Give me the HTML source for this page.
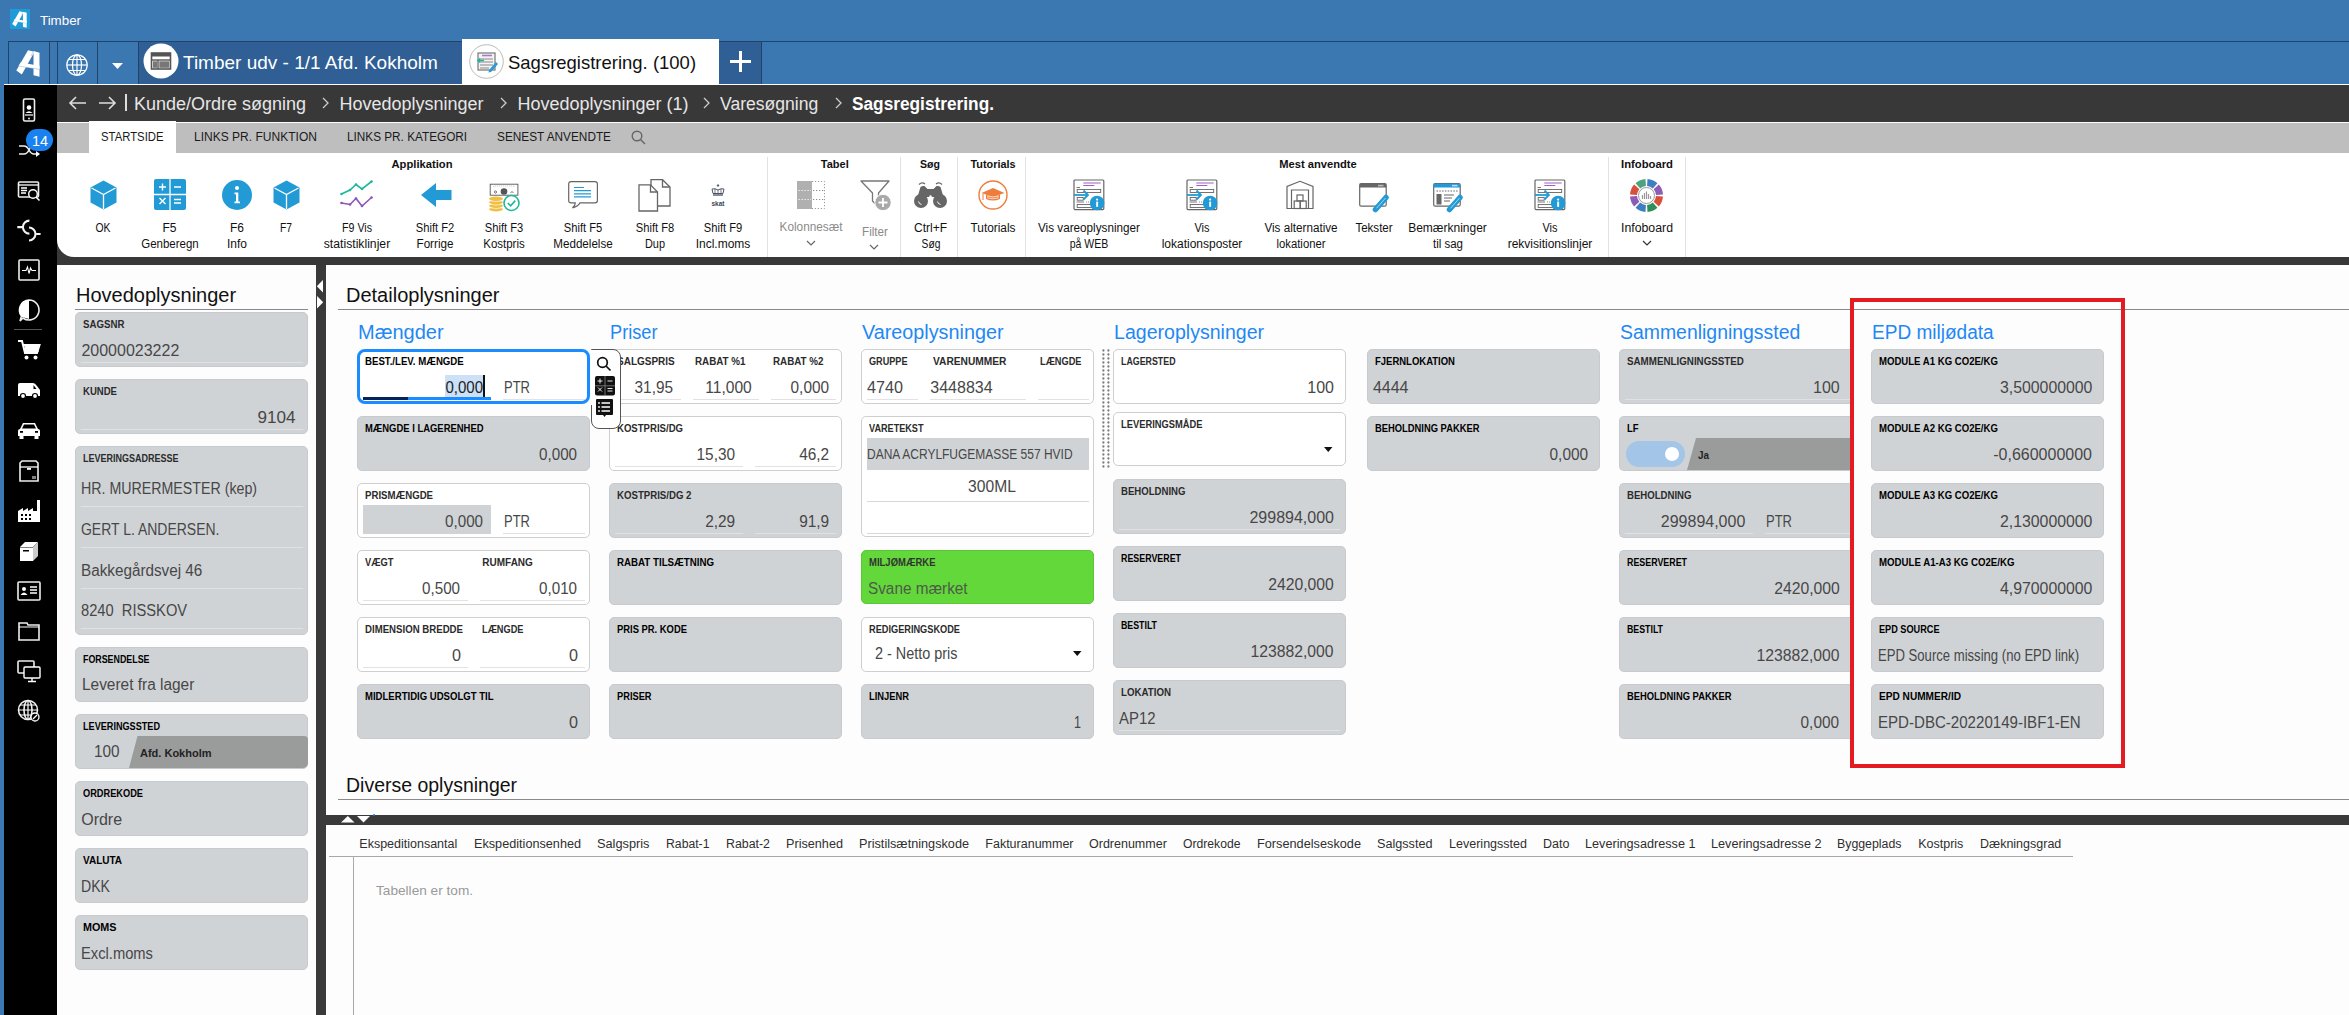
<!DOCTYPE html>
<html><head><meta charset="utf-8"><title>Timber</title>
<style>
html,body{margin:0;padding:0;}
body{width:2349px;height:1015px;position:relative;overflow:hidden;background:#fdfdfd;font-family:"Liberation Sans", sans-serif;}
.a{position:absolute;box-sizing:border-box;}
.t{position:absolute;white-space:pre;line-height:1;font-family:"Liberation Sans", sans-serif;}
svg{position:absolute;overflow:visible;}
</style></head><body>
<div class="a" style="left:0px;top:0px;width:2349px;height:85px;background:#3b77b1;"></div>
<div class="a" style="left:8px;top:41px;width:2341px;height:1px;background:#21436a;"></div>
<div class="a" style="left:10px;top:9px;width:20px;height:20px;background:#1f9bd8;"></div>
<svg style="left:12px;top:11px" width="15" height="17" viewBox="0 0 24 27"><path d="M12 0.3 L18.5 1.8 L5.8 24.5 L0.3 20.5 Z" fill="#fff"/><path d="M17.5 1 L23.5 2.8 L23.5 26.8 L17.5 25.2 Z" fill="#fff"/><path d="M4.5 12.5 L23.5 15.8 L23.5 19.5 L2.5 16.3 Z" fill="#fff"/><path d="M3.2 16.2 L23.5 19.4" stroke="#1f9bd8" stroke-width="0.6" opacity="0.5"/><path d="M17.3 1.5 L15 6" stroke="#1f9bd8" stroke-width="0.6" opacity="0.5"/></svg>
<span class="t" style="top:14.00px;font-size:13px;font-weight:400;color:#fff;left:40px;transform:scaleX(1.026);transform-origin:left;">Timber</span>
<div class="a" style="left:8px;top:41px;width:42px;height:44px;border:1px solid #21436a;border-bottom:none;"></div>
<svg style="left:16px;top:50px" width="24" height="27" viewBox="0 0 24 27"><path d="M12 0.3 L18.5 1.8 L5.8 24.5 L0.3 20.5 Z" fill="#fff"/><path d="M17.5 1 L23.5 2.8 L23.5 26.8 L17.5 25.2 Z" fill="#fff"/><path d="M4.5 12.5 L23.5 15.8 L23.5 19.5 L2.5 16.3 Z" fill="#fff"/><path d="M3.2 16.2 L23.5 19.4" stroke="#3b77b1" stroke-width="0.6" opacity="0.5"/><path d="M17.3 1.5 L15 6" stroke="#3b77b1" stroke-width="0.6" opacity="0.5"/></svg>
<div class="a" style="left:57px;top:41px;width:82px;height:44px;border:1px solid #21436a;border-bottom:none;"></div>
<div class="a" style="left:97px;top:41px;width:1px;height:44px;background:#21436a;"></div>
<svg style="left:66px;top:54px" width="22" height="22" viewBox="0 0 22 22" fill="none" stroke="#fff" stroke-width="1.2"><circle cx="11" cy="11" r="10.2"/><ellipse cx="11" cy="11" rx="4.5" ry="10.2"/><line x1="11" y1="0.8" x2="11" y2="21.2"/><line x1="0.8" y1="11" x2="21.2" y2="11"/><path d="M2.5 5.5 H19.5 M2.5 16.5 H19.5"/></svg>
<svg style="left:112px;top:63px" width="11" height="6" viewBox="0 0 11 6"><path d="M0 0 H11 L5.5 6 Z" fill="#fff"/></svg>
<div class="a" style="left:138px;top:41px;width:324px;height:44px;background:#2f5f94;border-top:1px solid #21436a;border-left:1px solid #21436a;"></div>
<svg style="left:143px;top:43px" width="36" height="36" viewBox="0 0 36 36"><circle cx="18" cy="18" r="17.5" fill="#fff"/><rect x="8.5" y="10" width="19" height="16" fill="none" stroke="#555" stroke-width="1.6"/><rect x="8.5" y="10" width="19" height="3.5" fill="#555"/><line x1="8.5" y1="17" x2="27.5" y2="17" stroke="#555" stroke-width="1.4"/><line x1="15" y1="17" x2="15" y2="26" stroke="#555" stroke-width="1.4"/><rect x="10" y="18.3" width="4" height="6.5" fill="#777"/><rect x="16.3" y="18.3" width="10" height="6.5" fill="#777"/></svg>
<span class="t" style="top:52.92px;font-size:19px;font-weight:400;color:#fff;left:183px;">Timber udv - 1/1 Afd. Kokholm</span>
<div class="a" style="left:462px;top:39px;width:257px;height:46px;background:#fff;"></div>
<svg style="left:469px;top:44px" width="35" height="35" viewBox="0 0 35 35"><circle cx="17.5" cy="17.5" r="16.8" fill="#fff" stroke="#bbb" stroke-width="1"/><rect x="9" y="9" width="17" height="17" fill="#f4f4f4" stroke="#777" stroke-width="1.2"/><line x1="13" y1="11.5" x2="23" y2="11.5" stroke="#a678c8" stroke-width="1.6"/><path d="M11 15 H24 M11 18 H24 M11 21 H24 M11 24 H20" stroke="#888" stroke-width="1"/><path d="M9 16.5 H15 M11 14.5 L9 16.5 L11 18.5" stroke="#1fb39a" stroke-width="1.4" fill="none"/><path d="M20 26 L27 18 L29 20 L22 28 L19.5 28.5 Z" fill="#2a9ad6"/></svg>
<span class="t" style="top:52.92px;font-size:19px;font-weight:400;color:#111;left:508px;transform:scaleX(0.973);transform-origin:left;">Sagsregistrering. (100)</span>
<div class="a" style="left:719px;top:41px;width:43px;height:44px;background:#2f5f94;border-right:1px solid #21436a;border-top:1px solid #21436a;"></div>
<div class="a" style="left:730px;top:60px;width:21px;height:3px;background:#fff;"></div>
<div class="a" style="left:739px;top:51px;width:3px;height:21px;background:#fff;"></div>
<div class="a" style="left:4px;top:84px;width:2345px;height:1px;background:#fff;"></div>
<div class="a" style="left:0px;top:85px;width:4px;height:930px;background:#3b77b1;"></div>
<div class="a" style="left:4px;top:85px;width:53px;height:930px;background:#000;"></div>
<div class="a" style="left:57px;top:85px;width:2292px;height:37px;background:#383838;"></div>
<svg style="left:69px;top:95px" width="50" height="16" viewBox="0 0 50 16" fill="none" stroke="#ddd" stroke-width="1.6"><path d="M1 8 H17 M7 2 L1 8 L7 14"/><path d="M30 8 H46 M40 2 L46 8 L40 14"/></svg>
<div class="a" style="left:125px;top:94px;width:1.5px;height:17px;background:#ddd;"></div>
<span class="t" style="top:95.26px;font-size:18px;font-weight:400;color:#e6e6e6;left:134px;">Kunde/Ordre søgning</span>
<svg style="left:322px;top:97px" width="7" height="12" viewBox="0 0 7 12" fill="none" stroke="#ccc" stroke-width="1.3"><path d="M1 1 L6 6 L1 11"/></svg>
<span class="t" style="top:95.26px;font-size:18px;font-weight:400;color:#e6e6e6;left:339.5px;">Hovedoplysninger</span>
<svg style="left:500px;top:97px" width="7" height="12" viewBox="0 0 7 12" fill="none" stroke="#ccc" stroke-width="1.3"><path d="M1 1 L6 6 L1 11"/></svg>
<span class="t" style="top:95.26px;font-size:18px;font-weight:400;color:#e6e6e6;left:517.5px;">Hovedoplysninger (1)</span>
<svg style="left:703px;top:97px" width="7" height="12" viewBox="0 0 7 12" fill="none" stroke="#ccc" stroke-width="1.3"><path d="M1 1 L6 6 L1 11"/></svg>
<span class="t" style="top:95.26px;font-size:18px;font-weight:400;color:#e6e6e6;left:720.3px;transform:scaleX(0.976);transform-origin:left;">Varesøgning</span>
<svg style="left:835px;top:97px" width="7" height="12" viewBox="0 0 7 12" fill="none" stroke="#ccc" stroke-width="1.3"><path d="M1 1 L6 6 L1 11"/></svg>
<span class="t" style="top:95.26px;font-size:18px;font-weight:700;color:#fff;left:852.3px;transform:scaleX(0.959);transform-origin:left;">Sagsregistrering.</span>
<div class="a" style="left:57px;top:123px;width:2292px;height:30px;background:#bebebe;"></div>
<div class="a" style="left:89px;top:121px;width:87px;height:32px;background:#fff;"></div>
<span class="t" style="top:130.62px;font-size:12.5px;font-weight:400;color:#1a1a1a;left:101px;transform:scaleX(0.906);transform-origin:left;">STARTSIDE</span>
<span class="t" style="top:130.62px;font-size:12.5px;font-weight:400;color:#1a1a1a;left:194px;transform:scaleX(0.962);transform-origin:left;">LINKS PR. FUNKTION</span>
<span class="t" style="top:130.62px;font-size:12.5px;font-weight:400;color:#1a1a1a;left:347px;transform:scaleX(0.941);transform-origin:left;">LINKS PR. KATEGORI</span>
<span class="t" style="top:130.62px;font-size:12.5px;font-weight:400;color:#1a1a1a;left:497.3px;transform:scaleX(0.945);transform-origin:left;">SENEST ANVENDTE</span>
<svg style="left:631px;top:130px" width="15" height="15" viewBox="0 0 15 15" fill="none" stroke="#666" stroke-width="1.4"><circle cx="6" cy="6" r="4.8"/><path d="M9.5 9.5 L14 14"/></svg>
<div class="a" style="left:57px;top:153px;width:2292px;height:112px;background:#383838;"></div>
<div class="a" style="left:57px;top:153px;width:2292px;height:104px;background:#fff;border-bottom-left-radius:17px;"></div>
<span class="t" style="top:159.49px;font-size:11px;font-weight:700;color:#111;left:-178.5px;width:1200px;text-align:center;transform:scaleX(1.019);transform-origin:center;">Applikation</span>
<span class="t" style="top:159.49px;font-size:11px;font-weight:700;color:#111;left:234.79999999999995px;width:1200px;text-align:center;">Tabel</span>
<span class="t" style="top:159.49px;font-size:11px;font-weight:700;color:#111;left:330px;width:1200px;text-align:center;transform:scaleX(0.962);transform-origin:center;">Søg</span>
<span class="t" style="top:159.49px;font-size:11px;font-weight:700;color:#111;left:392.6px;width:1200px;text-align:center;transform:scaleX(0.986);transform-origin:center;">Tutorials</span>
<span class="t" style="top:159.49px;font-size:11px;font-weight:700;color:#111;left:718px;width:1200px;text-align:center;transform:scaleX(1.015);transform-origin:center;">Mest anvendte</span>
<span class="t" style="top:159.49px;font-size:11px;font-weight:700;color:#111;left:1047px;width:1200px;text-align:center;transform:scaleX(1.025);transform-origin:center;">Infoboard</span>
<div class="a" style="left:767px;top:157px;width:1px;height:100px;background:#e2e2e2;"></div>
<div class="a" style="left:900px;top:157px;width:1px;height:100px;background:#e2e2e2;"></div>
<div class="a" style="left:957px;top:157px;width:1px;height:100px;background:#e2e2e2;"></div>
<div class="a" style="left:1025px;top:157px;width:1px;height:100px;background:#e2e2e2;"></div>
<div class="a" style="left:1608px;top:157px;width:1px;height:100px;background:#e2e2e2;"></div>
<div class="a" style="left:1685px;top:157px;width:1px;height:100px;background:#e2e2e2;"></div>
<svg style="left:89.5px;top:180px" width="27" height="30" viewBox="0 0 27 30"><path d="M13.5 0.5 L26.5 7.5 L26.5 22.5 L13.5 29.5 L0.5 22.5 L0.5 7.5 Z" fill="#229ad6"/><path d="M1.5 8 L13.5 14.5 L25.5 8 M13.5 14.5 V29" stroke="#fff" stroke-width="1.3" fill="none"/></svg>
<span class="t" style="top:221.54px;font-size:12px;font-weight:400;color:#111;left:-497px;width:1200px;text-align:center;transform:scaleX(0.865);transform-origin:center;">OK</span>
<svg style="left:154px;top:179px" width="32" height="31" viewBox="0 0 32 31"><rect x="0" y="0" width="32" height="31" rx="2" fill="#229ad6"/><path d="M16 0 V31 M0 15.5 H32" stroke="#fff" stroke-width="1.3"/><path d="M5 8 H12 M8.5 4.5 V11.5 M20 8 H27 M20 20.5 H27 M20 24 H27 M5.5 19 L11.5 25 M11.5 19 L5.5 25" stroke="#fff" stroke-width="1.4"/></svg>
<span class="t" style="top:221.54px;font-size:12px;font-weight:400;color:#111;left:-430.5px;width:1200px;text-align:center;">F5</span>
<span class="t" style="top:237.74px;font-size:12px;font-weight:400;color:#111;left:-430.5px;width:1200px;text-align:center;transform:scaleX(0.956);transform-origin:center;">Genberegn</span>
<svg style="left:222px;top:180px" width="30" height="30" viewBox="0 0 30 30"><circle cx="15" cy="15" r="15" fill="#229ad6"/><circle cx="15" cy="8" r="2" fill="#fff"/><path d="M12.5 12.5 H16.3 V21.5 H18 V23.3 H12.5 V21.5 H14 V14.3 H12.5 Z" fill="#fff"/></svg>
<span class="t" style="top:221.54px;font-size:12px;font-weight:400;color:#111;left:-363px;width:1200px;text-align:center;">F6</span>
<span class="t" style="top:237.74px;font-size:12px;font-weight:400;color:#111;left:-363px;width:1200px;text-align:center;">Info</span>
<svg style="left:272.5px;top:180px" width="27" height="30" viewBox="0 0 27 30"><path d="M13.5 0.5 L26.5 7.5 L26.5 22.5 L13.5 29.5 L0.5 22.5 L0.5 7.5 Z" fill="#229ad6"/><path d="M1.5 8 L13.5 14.5 L25.5 8 M13.5 14.5 V29" stroke="#fff" stroke-width="1.3" fill="none"/></svg>
<span class="t" style="top:221.54px;font-size:12px;font-weight:400;color:#111;left:-314px;width:1200px;text-align:center;transform:scaleX(0.856);transform-origin:center;">F7</span>
<svg style="left:340px;top:180px" width="33" height="29" viewBox="0 0 33 29" fill="none"><path d="M1.5 14 L10 10 L16 4.5 L22 9 L31.5 1.5" stroke="#1db99a" stroke-width="1.6"/><path d="M1.5 23 L10 24.5 L16 18.5 L22 26 L31.5 17.5" stroke="#8e55b8" stroke-width="1.6"/><g fill="#1db99a"><circle cx="1.5" cy="14" r="1.3"/><circle cx="10" cy="10" r="1.3"/><circle cx="16" cy="4.5" r="1.3"/><circle cx="22" cy="9" r="1.3"/><circle cx="31.5" cy="1.5" r="1.3"/></g><g fill="#8e55b8"><circle cx="1.5" cy="23" r="1.3"/><circle cx="10" cy="24.5" r="1.3"/><circle cx="16" cy="18.5" r="1.3"/><circle cx="22" cy="26" r="1.3"/><circle cx="31.5" cy="17.5" r="1.3"/></g></svg>
<span class="t" style="top:221.54px;font-size:12px;font-weight:400;color:#111;left:-243px;width:1200px;text-align:center;transform:scaleX(0.888);transform-origin:center;">F9 Vis</span>
<span class="t" style="top:237.74px;font-size:12px;font-weight:400;color:#111;left:-243px;width:1200px;text-align:center;transform:scaleX(1.017);transform-origin:center;">statistiklinjer</span>
<svg style="left:420.5px;top:183px" width="31" height="24" viewBox="0 0 31 24"><path d="M0 12 L15 0 V7 H30.5 V17 H15 V24 Z" fill="#229ad6"/></svg>
<span class="t" style="top:221.54px;font-size:12px;font-weight:400;color:#111;left:-165px;width:1200px;text-align:center;transform:scaleX(0.931);transform-origin:center;">Shift F2</span>
<span class="t" style="top:237.74px;font-size:12px;font-weight:400;color:#111;left:-165px;width:1200px;text-align:center;transform:scaleX(0.973);transform-origin:center;">Forrige</span>
<svg style="left:488px;top:183px" width="33" height="29" viewBox="0 0 33 29"><rect x="2.2" y="1.2" width="27.7" height="11" fill="#fff" stroke="#555" stroke-width="0.9"/><path d="M5 4 Q6 3 8 3 H24 Q26 3 27 4" stroke="#999" stroke-width="0.6" stroke-dasharray="1 1" fill="none"/><circle cx="16" cy="8.5" r="3.3" fill="#555"/><circle cx="7.5" cy="9" r="1.1" fill="none" stroke="#555" stroke-width="0.8"/><path d="M22.5 9.5 Q24 8 25.5 9.5" stroke="#555" stroke-width="0.8" fill="none"/><g fill="#f0bf45"><ellipse cx="8" cy="26.3" rx="7" ry="2.2"/><ellipse cx="8" cy="22.8" rx="7" ry="2.2"/><ellipse cx="8" cy="19.3" rx="7" ry="2.2"/><ellipse cx="8" cy="15.8" rx="7" ry="2.2"/></g><path d="M1 17.6 Q8 19.6 15 17.6 M1 21.1 Q8 23.1 15 21.1 M1 24.6 Q8 26.6 15 24.6" stroke="#fff" stroke-width="0.6" fill="none"/><circle cx="23.5" cy="20" r="7.5" fill="#fff" stroke="#1db99a" stroke-width="1.6"/><path d="M19.8 20 L22.6 22.8 L27.3 17.6" stroke="#1db99a" stroke-width="1.6" fill="none"/></svg>
<span class="t" style="top:221.54px;font-size:12px;font-weight:400;color:#111;left:-96.5px;width:1200px;text-align:center;transform:scaleX(0.931);transform-origin:center;">Shift F3</span>
<span class="t" style="top:237.74px;font-size:12px;font-weight:400;color:#111;left:-96.5px;width:1200px;text-align:center;transform:scaleX(0.957);transform-origin:center;">Kostpris</span>
<svg style="left:568px;top:181px" width="31" height="28" viewBox="0 0 31 28"><path d="M3 0.7 H27 Q29.4 0.7 29.4 3 V19.5 Q29.4 21.8 27 21.8 H12 Q10.5 25.5 4.5 26.8 Q7.5 24.5 7.3 21.8 H3 Q0.7 21.8 0.7 19.5 V3 Q0.7 0.7 3 0.7 Z" fill="#fff" stroke="#666" stroke-width="1.2"/><path d="M6 6.5 H16 M6 9.7 H23 M6 12.8 H23 M6 15.8 H23" stroke="#229ad6" stroke-width="1.2"/></svg>
<span class="t" style="top:221.54px;font-size:12px;font-weight:400;color:#111;left:-17px;width:1200px;text-align:center;transform:scaleX(0.931);transform-origin:center;">Shift F5</span>
<span class="t" style="top:237.74px;font-size:12px;font-weight:400;color:#111;left:-17px;width:1200px;text-align:center;transform:scaleX(0.969);transform-origin:center;">Meddelelse</span>
<svg style="left:637.5px;top:178.5px" width="33" height="33" viewBox="0 0 33 33" fill="#fff" stroke="#666" stroke-width="1.3"><path d="M13 0.7 H24.5 L32 8 V27 H13 Z"/><path d="M24.5 0.7 V8 H32" fill="none"/><path d="M1 5.8 H12.5 L19.5 13 V32 H1 Z"/><path d="M12.5 5.8 V13 H19.5" fill="none"/></svg>
<span class="t" style="top:221.54px;font-size:12px;font-weight:400;color:#111;left:55px;width:1200px;text-align:center;transform:scaleX(0.931);transform-origin:center;">Shift F8</span>
<span class="t" style="top:237.74px;font-size:12px;font-weight:400;color:#111;left:55px;width:1200px;text-align:center;transform:scaleX(0.908);transform-origin:center;">Dup</span>
<svg style="left:709px;top:184px" width="18" height="24" viewBox="0 0 18 24"><path d="M9 0 V3 M7.8 1.5 H10.2" stroke="#3a4456" stroke-width="0.8"/><path d="M4 9.5 L3 5 Q6 4 9 6 Q12 4 15 5 L14 9.5 Z" fill="none" stroke="#3a4456" stroke-width="0.9"/><path d="M6 5 V9.5 M9 6 V9.5 M12 5 V9.5" stroke="#3a4456" stroke-width="0.7"/><path d="M4 11 H14" stroke="#3a4456" stroke-width="1.2"/><text x="9" y="22" font-size="6.5" font-weight="700" text-anchor="middle" fill="#3a4456" font-family="Liberation Sans">skat</text></svg>
<span class="t" style="top:221.54px;font-size:12px;font-weight:400;color:#111;left:123px;width:1200px;text-align:center;transform:scaleX(0.931);transform-origin:center;">Shift F9</span>
<span class="t" style="top:237.74px;font-size:12px;font-weight:400;color:#111;left:123px;width:1200px;text-align:center;">Incl.moms</span>
<svg style="left:797px;top:181px" width="28" height="28" viewBox="0 0 28 28"><rect x="0" y="0" width="15" height="28" fill="#b0b0b0"/><g stroke-width="1" stroke-dasharray="1.2 1.8" fill="none"><path d="M15 0.5 H27.5 V27.5 H15" stroke="#999"/><path d="M1.5 9.5 H14 M1.5 18.5 H14" stroke="#fff"/><path d="M16 9.5 H27 M16 18.5 H27" stroke="#888"/></g></svg>
<span class="t" style="top:221.34px;font-size:12px;font-weight:400;color:#8a8a8a;left:211px;width:1200px;text-align:center;transform:scaleX(0.981);transform-origin:center;">Kolonnesæt</span>
<svg style="left:806px;top:240px" width="10" height="6" viewBox="0 0 10 6" fill="none" stroke="#666" stroke-width="1.2"><path d="M1 1 L5 5 L9 1"/></svg>
<svg style="left:860px;top:180px" width="33" height="32" viewBox="0 0 33 32"><path d="M1 1 H29 L18.5 13 V27 L12.5 21 V13 Z" fill="none" stroke="#777" stroke-width="1.3" stroke-linejoin="round"/><circle cx="23" cy="22.5" r="8.2" fill="#a9a9a9" stroke="#fff" stroke-width="1"/><path d="M23 18 V27 M18.5 22.5 H27.5" stroke="#fff" stroke-width="1.8"/></svg>
<span class="t" style="top:225.84px;font-size:12px;font-weight:400;color:#8a8a8a;left:275px;width:1200px;text-align:center;transform:scaleX(0.975);transform-origin:center;">Filter</span>
<svg style="left:869px;top:244px" width="10" height="6" viewBox="0 0 10 6" fill="none" stroke="#666" stroke-width="1.2"><path d="M1 1 L5 5 L9 1"/></svg>
<svg style="left:913.5px;top:181px" width="33" height="28" viewBox="0 0 33 28"><path d="M5 3.5 Q8 0.5 11 3 M22 3 Q25 0.5 28 3.5" stroke="#666" stroke-width="1.2" fill="none"/><path d="M3.5 16 L6.5 6 Q8 4.5 10.5 5 L13.5 8 H19.5 L22.5 5 Q25 4.5 26.5 6 L29.5 16 Z" fill="#666"/><circle cx="7" cy="20" r="7" fill="#666"/><circle cx="26" cy="20" r="7" fill="#666"/><circle cx="16.5" cy="15.5" r="1.2" fill="#fff"/><path d="M4.5 20.5 Q5 23 7.5 23.5 M23.5 20.5 Q24 23 26.5 23.5" stroke="#fff" stroke-width="1" fill="none"/></svg>
<span class="t" style="top:221.54px;font-size:12px;font-weight:400;color:#111;left:330.5px;width:1200px;text-align:center;">Ctrl+F</span>
<span class="t" style="top:237.74px;font-size:12px;font-weight:400;color:#111;left:330.5px;width:1200px;text-align:center;transform:scaleX(0.854);transform-origin:center;">Søg</span>
<svg style="left:978px;top:180px" width="30" height="30" viewBox="0 0 30 30"><circle cx="15" cy="15" r="14" fill="#fff" stroke="#ee7d3b" stroke-width="1.4"/><path d="M3.5 13 L15 8 L26.5 13 L15 17 Z" fill="#ee7d3b"/><path d="M8 14.5 V19 Q15 22 22 19 V14.5 L15 17 Z" fill="#ee7d3b"/><path d="M9 16 Q15 18 21 16 M9 17.8 Q15 19.8 21 17.8" stroke="#fff" stroke-width="0.7" fill="none"/><path d="M5 13.5 V20" stroke="#ee7d3b" stroke-width="1"/></svg>
<span class="t" style="top:221.54px;font-size:12px;font-weight:400;color:#111;left:393px;width:1200px;text-align:center;transform:scaleX(0.987);transform-origin:center;">Tutorials</span>
<svg style="left:1073px;top:179px" width="33" height="32" viewBox="0 0 33 32"><rect x="1" y="1" width="29.8" height="29.6" rx="1" fill="#fff" stroke="#666" stroke-width="1.2"/><path d="M10.3 4 H27.7 M10.3 6.5 H21.3" stroke="#a15fc9" stroke-width="1.1"/><path d="M3.5 8.5 H7 M3.5 23 H11 M13 23 H13.8 M15 23 H15.8" stroke="#666" stroke-width="0.9"/><rect x="4.2" y="10.5" width="23.5" height="3" fill="none" stroke="#666" stroke-width="0.9"/><rect x="4.2" y="18.5" width="6" height="2.7" fill="none" stroke="#666" stroke-width="0.9"/><rect x="4.2" y="25.5" width="18" height="3" fill="none" stroke="#666" stroke-width="0.9"/><path d="M1 16 H15" stroke="#229ad6" stroke-width="1.8"/><path d="M10.5 11.5 L15 16 L10.5 20.5" stroke="#229ad6" stroke-width="1.8" fill="none"/><circle cx="24.1" cy="24" r="7.3" fill="#229ad6"/><circle cx="24.1" cy="20.6" r="1.1" fill="#fff"/><rect x="23.2" y="22.6" width="1.9" height="5.2" fill="#fff"/></svg>
<span class="t" style="top:221.54px;font-size:12px;font-weight:400;color:#111;left:489px;width:1200px;text-align:center;transform:scaleX(0.976);transform-origin:center;">Vis vareoplysninger</span>
<span class="t" style="top:237.74px;font-size:12px;font-weight:400;color:#111;left:489px;width:1200px;text-align:center;transform:scaleX(0.877);transform-origin:center;">på WEB</span>
<svg style="left:1186px;top:179px" width="33" height="32" viewBox="0 0 33 32"><rect x="1" y="1" width="29.8" height="29.6" rx="1" fill="#fff" stroke="#666" stroke-width="1.2"/><path d="M10.3 4 H27.7 M10.3 6.5 H21.3" stroke="#a15fc9" stroke-width="1.1"/><path d="M3.5 8.5 H7 M3.5 23 H11 M13 23 H13.8 M15 23 H15.8" stroke="#666" stroke-width="0.9"/><rect x="4.2" y="10.5" width="23.5" height="3" fill="none" stroke="#666" stroke-width="0.9"/><rect x="4.2" y="18.5" width="6" height="2.7" fill="none" stroke="#666" stroke-width="0.9"/><rect x="4.2" y="25.5" width="18" height="3" fill="none" stroke="#666" stroke-width="0.9"/><path d="M1 16 H15" stroke="#229ad6" stroke-width="1.8"/><path d="M10.5 11.5 L15 16 L10.5 20.5" stroke="#229ad6" stroke-width="1.8" fill="none"/><circle cx="24.1" cy="24" r="7.3" fill="#229ad6"/><circle cx="24.1" cy="20.6" r="1.1" fill="#fff"/><rect x="23.2" y="22.6" width="1.9" height="5.2" fill="#fff"/></svg>
<span class="t" style="top:221.54px;font-size:12px;font-weight:400;color:#111;left:602px;width:1200px;text-align:center;transform:scaleX(0.912);transform-origin:center;">Vis</span>
<span class="t" style="top:237.74px;font-size:12px;font-weight:400;color:#111;left:602px;width:1200px;text-align:center;">lokationsposter</span>
<svg style="left:1286px;top:180px" width="30" height="30" viewBox="0 0 30 30" fill="none" stroke="#666" stroke-width="1.2"><path d="M1 28.5 V6.5 L14 1.3 L27 6.5 V28.5 Z"/><path d="M5.5 28.5 V10 H22.5 V28.5"/><rect x="11" y="15" width="6" height="6"/><rect x="8.2" y="21" width="6" height="7.5"/><rect x="14.2" y="21" width="6" height="7.5"/></svg>
<span class="t" style="top:221.54px;font-size:12px;font-weight:400;color:#111;left:701px;width:1200px;text-align:center;transform:scaleX(0.974);transform-origin:center;">Vis alternative</span>
<span class="t" style="top:237.74px;font-size:12px;font-weight:400;color:#111;left:701px;width:1200px;text-align:center;transform:scaleX(0.942);transform-origin:center;">lokationer</span>
<svg style="left:1359px;top:183px" width="31" height="29" viewBox="0 0 31 29"><rect x="0.7" y="0.7" width="26.5" height="22.5" rx="1.5" fill="#fff" stroke="#666" stroke-width="1.2"/><rect x="0.7" y="0.7" width="26.5" height="3.8" fill="#666"/><rect x="19" y="1.8" width="5.5" height="1.6" fill="#bbb"/><path d="M16.5 26.5 L27 14.5" stroke="#229ad6" stroke-width="5.5" stroke-linecap="round"/><path d="M14.5 28.5 L17 23.5 L19.5 26 Z" fill="#229ad6"/><path d="M17.5 25.3 L26.5 15" stroke="#fff" stroke-width="1" opacity="0.6"/></svg>
<span class="t" style="top:221.54px;font-size:12px;font-weight:400;color:#111;left:773.5px;width:1200px;text-align:center;transform:scaleX(0.962);transform-origin:center;">Tekster</span>
<svg style="left:1433px;top:183px" width="31" height="29" viewBox="0 0 31 29"><rect x="0.7" y="0.7" width="26.5" height="22.5" rx="1.5" fill="#fff" stroke="#666" stroke-width="1.2"/><rect x="0.7" y="0.7" width="26.5" height="3.8" fill="#229ad6"/><rect x="19" y="1.8" width="5.5" height="1.6" fill="#bde"/><rect x="3.5" y="11" width="5" height="10.5" fill="#666"/><path d="M3.5 8 H25" stroke="#666" stroke-width="1.2" stroke-dasharray="1.5 1.3"/><path d="M11 12 H21 M11 15 H19 M11 18 H17" stroke="#666" stroke-width="1.1"/><path d="M16.5 26.5 L27 14.5" stroke="#229ad6" stroke-width="5.5" stroke-linecap="round"/><path d="M14.5 28.5 L17 23.5 L19.5 26 Z" fill="#229ad6"/><path d="M17.5 25.3 L26.5 15" stroke="#fff" stroke-width="1" opacity="0.6"/></svg>
<span class="t" style="top:221.54px;font-size:12px;font-weight:400;color:#111;left:847.5px;width:1200px;text-align:center;">Bemærkninger</span>
<span class="t" style="top:237.74px;font-size:12px;font-weight:400;color:#111;left:847.5px;width:1200px;text-align:center;transform:scaleX(0.957);transform-origin:center;">til sag</span>
<svg style="left:1534px;top:179px" width="33" height="32" viewBox="0 0 33 32"><rect x="1" y="1" width="29.8" height="29.6" rx="1" fill="#fff" stroke="#666" stroke-width="1.2"/><path d="M10.3 4 H27.7 M10.3 6.5 H21.3" stroke="#a15fc9" stroke-width="1.1"/><path d="M3.5 8.5 H7 M3.5 23 H11 M13 23 H13.8 M15 23 H15.8" stroke="#666" stroke-width="0.9"/><rect x="4.2" y="10.5" width="23.5" height="3" fill="none" stroke="#666" stroke-width="0.9"/><rect x="4.2" y="18.5" width="6" height="2.7" fill="none" stroke="#666" stroke-width="0.9"/><rect x="4.2" y="25.5" width="18" height="3" fill="none" stroke="#666" stroke-width="0.9"/><path d="M1 16 H15" stroke="#229ad6" stroke-width="1.8"/><path d="M10.5 11.5 L15 16 L10.5 20.5" stroke="#229ad6" stroke-width="1.8" fill="none"/><circle cx="24.1" cy="24" r="7.3" fill="#229ad6"/><circle cx="24.1" cy="20.6" r="1.1" fill="#fff"/><rect x="23.2" y="22.6" width="1.9" height="5.2" fill="#fff"/></svg>
<span class="t" style="top:221.54px;font-size:12px;font-weight:400;color:#111;left:950px;width:1200px;text-align:center;transform:scaleX(0.912);transform-origin:center;">Vis</span>
<span class="t" style="top:237.74px;font-size:12px;font-weight:400;color:#111;left:950px;width:1200px;text-align:center;">rekvisitionslinjer</span>
<svg style="left:1630px;top:178.5px" width="33" height="33" viewBox="0 0 33 33"><path d="M17.51 0.03 A16.5 16.5 0 0 1 27.43 4.14 L22.79 9.38 A9.5 9.5 0 0 0 17.08 7.02 Z" fill="#3f7fc1"/><path d="M28.86 5.57 A16.5 16.5 0 0 1 32.97 15.49 L25.98 15.92 A9.5 9.5 0 0 0 23.62 10.21 Z" fill="#8e5bb6"/><path d="M32.97 17.51 A16.5 16.5 0 0 1 28.86 27.43 L23.62 22.79 A9.5 9.5 0 0 0 25.98 17.08 Z" fill="#d9503a"/><path d="M27.43 28.86 A16.5 16.5 0 0 1 17.51 32.97 L17.08 25.98 A9.5 9.5 0 0 0 22.79 23.62 Z" fill="#2e8f58"/><path d="M15.49 32.97 A16.5 16.5 0 0 1 5.57 28.86 L10.21 23.62 A9.5 9.5 0 0 0 15.92 25.98 Z" fill="#3f7fc1"/><path d="M4.14 27.43 A16.5 16.5 0 0 1 0.03 17.51 L7.02 17.08 A9.5 9.5 0 0 0 9.38 22.79 Z" fill="#8e5bb6"/><path d="M0.03 15.49 A16.5 16.5 0 0 1 4.14 5.57 L9.38 10.21 A9.5 9.5 0 0 0 7.02 15.92 Z" fill="#d9503a"/><path d="M5.57 4.14 A16.5 16.5 0 0 1 15.49 0.03 L15.92 7.02 A9.5 9.5 0 0 0 10.21 9.38 Z" fill="#4ea37e"/><circle cx="16.5" cy="16.5" r="8" fill="#fff" stroke="#999" stroke-width="1"/><path d="M12.5 20 V16 M14.5 20 V14 M16.5 20 V12.5 M18.5 20 V15 M20.5 20 V17" stroke="#999" stroke-width="1.2"/></svg>
<span class="t" style="top:221.54px;font-size:12px;font-weight:400;color:#111;left:1046.8px;width:1200px;text-align:center;transform:scaleX(1.025);transform-origin:center;">Infoboard</span>
<svg style="left:1641.5px;top:240px" width="10" height="6" viewBox="0 0 10 6" fill="none" stroke="#333" stroke-width="1.2"><path d="M1 1 L5 5 L9 1"/></svg>
<svg style="left:17.0px;top:97.5px" width="24" height="24" viewBox="0 0 24 24"><rect x="6.5" y="1" width="11" height="22" rx="1.5" fill="none" stroke="#eee" stroke-width="1.6"/><circle cx="12" cy="9.5" r="2.3" fill="#fff"/><path d="M8.5 15 Q12 11.5 15.5 15 Z" fill="#fff"/><path d="M8 17 H16" stroke="#fff" stroke-width="1.2"/><circle cx="12" cy="20.5" r="0.9" fill="#fff"/></svg>
<svg style="left:17.0px;top:138.0px" width="24" height="24" viewBox="0 0 24 24"><path d="M2 8 H7 Q10 8 12 12 Q14 16 17 16 H21 M2 16 H7 Q10 16 12 12 Q14 8 17 8" fill="none" stroke="#eee" stroke-width="1.6"/><path d="M19 13 L23 16 L19 19 Z" fill="#fff"/></svg>
<svg style="left:17.0px;top:178.5px" width="24" height="24" viewBox="0 0 24 24"><rect x="1.5" y="3" width="20" height="15" rx="1" fill="none" stroke="#eee" stroke-width="1.6" stroke-width="1.3"/><path d="M1.5 6 H21.5" stroke="#fff" stroke-width="1.3"/><path d="M4 9 H10 M4 11.5 H10 M4 14 H9" stroke="#fff" stroke-width="1.5"/><circle cx="16" cy="15" r="4.3" fill="#000" stroke="#fff" stroke-width="1.4"/><path d="M19 18 L22.5 21.5" stroke="#fff" stroke-width="1.5"/></svg>
<svg style="left:17.0px;top:218.5px" width="24" height="24" viewBox="0 0 24 24"><path d="M12.4 1.6 A6.5 6.5 0 0 0 12.4 14.6 M0.3 8.1 H5.9 M12 8.5 A6.5 6.5 0 0 1 12 21.5 M18.5 15 H23.6" fill="none" stroke="#f2f2f2" stroke-width="2.1"/></svg>
<svg style="left:17.0px;top:258.0px" width="24" height="24" viewBox="0 0 24 24"><rect x="2" y="2" width="20" height="20" rx="1" fill="none" stroke="#eee" stroke-width="1.6"/><path d="M5 12.5 H9 L10.5 9 L12 15.5 L13.5 10 L15 12.5 H19" stroke="#fff" stroke-width="1.1" fill="none"/></svg>
<svg style="left:17.0px;top:298.0px" width="24" height="24" viewBox="0 0 24 24"><path d="M12 2 A10 10 0 1 1 6 20 L3 23 L4.5 18 A10 10 0 0 1 12 2 Z" fill="none" stroke="#eee" stroke-width="1.6" stroke-width="1.8"/><path d="M12 2 A10 10 0 0 0 5 19 L12 21 Z" fill="#fff"/></svg>
<div class="a" style="left:14px;top:329px;width:28px;height:1px;background:#555;"></div>
<svg style="left:17.0px;top:338.0px" width="24" height="24" viewBox="0 0 24 24"><path d="M1 3 H5 L8 15 H20 L22.5 7 H6.5" fill="none" stroke="#fff" stroke-width="2"/><rect x="7.5" y="8" width="14" height="6" fill="#fff"/><circle cx="9.5" cy="19.5" r="2" fill="#fff"/><circle cx="18.5" cy="19.5" r="2" fill="#fff"/></svg>
<svg style="left:17.0px;top:378.0px" width="24" height="24" viewBox="0 0 24 24"><path d="M1 7 Q1 5 3 5 H16 Q18 5 20 8 L23 12 V18 H1 Z" fill="#fff"/><path d="M16.5 7 L19.5 11 H16.5 Z" fill="#000"/><circle cx="6" cy="18" r="2.5" fill="#fff" stroke="#000" stroke-width="1.2"/><circle cx="18" cy="18" r="2.5" fill="#fff" stroke="#000" stroke-width="1.2"/></svg>
<svg style="left:17.0px;top:418.0px" width="24" height="24" viewBox="0 0 24 24"><path d="M3 11 L6 5 H18 L21 11 Q23 11 23 13 V18 H1 V13 Q1 11 3 11 Z" fill="#fff"/><path d="M7 6.5 H17 L19 10.5 H5 Z" fill="#000"/><rect x="2.5" y="17" width="4" height="4" fill="#fff"/><rect x="17.5" y="17" width="4" height="4" fill="#fff"/><rect x="3" y="13" width="3" height="1.8" fill="#000"/><rect x="18" y="13" width="3" height="1.8" fill="#000"/></svg>
<svg style="left:17.0px;top:458.5px" width="24" height="24" viewBox="0 0 24 24"><path d="M3 4 L5 2 H19 L21 4 V22 H3 Z" fill="none" stroke="#eee" stroke-width="1.6" stroke-width="1.5"/><path d="M3 8 H21" stroke="#fff" stroke-width="1.3"/><rect x="10" y="9" width="4" height="1.8" fill="#fff"/><path d="M16 17 V20 M18 17 V20" stroke="#fff" stroke-width="1"/></svg>
<svg style="left:17.0px;top:499.0px" width="24" height="24" viewBox="0 0 24 24"><path d="M1 23 V12 L6 9 V12 L11 9 V12 L16 9 V12 L20 12 V1 H23 V23 Z" fill="#fff"/><g fill="#000"><rect x="4" y="15" width="2" height="2"/><rect x="8" y="15" width="2" height="2"/><rect x="12" y="15" width="2" height="2"/><rect x="4" y="19" width="2" height="2"/><rect x="8" y="19" width="2" height="2"/><rect x="12" y="19" width="2" height="2"/></g></svg>
<svg style="left:17.0px;top:539.0px" width="24" height="24" viewBox="0 0 24 24"><path d="M3 8 L8 3 H21 L16 8 Z" fill="#fff"/><path d="M16 8 L21 3 V17 L16 22 Z" fill="#ccc"/><rect x="3" y="8.5" width="13" height="13.5" fill="#fff"/><rect x="6" y="11" width="6" height="1.5" fill="#000"/></svg>
<svg style="left:17.0px;top:579.0px" width="24" height="24" viewBox="0 0 24 24"><rect x="1" y="3" width="22" height="18" rx="1" fill="none" stroke="#eee" stroke-width="1.6" stroke-width="1.4"/><circle cx="7" cy="10" r="2" fill="#fff"/><path d="M3.5 16 Q7 11 10.5 16 Z" fill="#fff"/><path d="M13 8 H20 M13 11 H20 M13 14 H20" stroke="#fff" stroke-width="1.4"/></svg>
<svg style="left:17.0px;top:619.0px" width="24" height="24" viewBox="0 0 24 24"><path d="M2 4 H10 L11 6 H22 V21 H2 Z" fill="none" stroke="#eee" stroke-width="1.6" stroke-width="1.4"/><path d="M2 8 H22" stroke="#fff" stroke-width="1"/></svg>
<svg style="left:17.0px;top:659.0px" width="24" height="24" viewBox="0 0 24 24"><rect x="1" y="2" width="16" height="12" rx="1" fill="none" stroke="#eee" stroke-width="1.6" stroke-width="1.4"/><rect x="7" y="8" width="16" height="11" rx="1" fill="#000" stroke="#fff" stroke-width="1.4"/><path d="M15 19 V22 M11 22.5 H19" stroke="#fff" stroke-width="1.4"/></svg>
<svg style="left:17.0px;top:699.0px" width="24" height="24" viewBox="0 0 24 24"><circle cx="11" cy="11" r="9.5" fill="none" stroke="#eee" stroke-width="1.6" stroke-width="1.3"/><ellipse cx="11" cy="11" rx="4" ry="9.5" fill="none" stroke="#eee" stroke-width="1.6" stroke-width="1.3"/><path d="M1.5 11 H20.5 M3 6 H19 M3 16 H19 M11 1.5 V20.5" stroke="#fff" stroke-width="1.2"/><circle cx="18" cy="18" r="4" fill="#000" stroke="#fff" stroke-width="1.3"/><path d="M16 20 L20 16" stroke="#fff" stroke-width="1.3"/></svg>
<div class="a" style="left:26px;top:129px;width:27px;height:22px;border-radius:11px;background:#1a82f0;"></div>
<span class="t" style="top:133.65px;font-size:14px;font-weight:400;color:#fff;left:-560.5px;width:1200px;text-align:center;transform:scaleX(1.027);transform-origin:center;">14</span>
<div class="a" style="left:57px;top:265px;width:2292px;height:750px;background:#fdfdfd;"></div>
<div class="a" style="left:316px;top:265px;width:10px;height:750px;background:#3a3a3a;"></div>
<svg style="left:316px;top:280px" width="8" height="29" viewBox="0 0 8 29"><path d="M7 0 L0.8 6.2 L7 12.5 Z" fill="#fff"/><path d="M1 16 L7.2 22.2 L1 28.5 Z" fill="#fff"/></svg>
<span class="t" style="top:285.07px;font-size:20px;font-weight:400;color:#111;left:76px;">Hovedoplysninger</span>
<div class="a" style="left:75px;top:308.5px;width:233px;height:1.3px;background:#8a8a8a;"></div>
<span class="t" style="top:284.77px;font-size:20px;font-weight:400;color:#111;left:346px;">Detailoplysninger</span>
<div class="a" style="left:338px;top:308.5px;width:2011px;height:1.3px;background:#8a8a8a;"></div>
<span class="t" style="top:774.57px;font-size:20px;font-weight:400;color:#111;left:345.5px;transform:scaleX(0.974);transform-origin:left;">Diverse oplysninger</span>
<div class="a" style="left:338px;top:798.5px;width:2011px;height:1.3px;background:#8a8a8a;"></div>
<div class="a" style="left:75px;top:312px;width:233px;height:55px;background:#d0d3d6;border:1px solid #c8cacd;border-radius:5px;"></div>
<span class="t" style="top:319.54px;font-size:10px;font-weight:700;color:#2b2b2b;left:83px;transform:scaleX(0.967);transform-origin:left;">SAGSNR</span>
<span class="t" style="top:342.56px;font-size:16px;font-weight:400;color:#474747;left:81.4px;">20000023222</span>
<div class="a" style="left:81px;top:362px;width:222px;height:1px;background:#dfe1e3;"></div>
<div class="a" style="left:75px;top:379px;width:233px;height:55px;background:#d0d3d6;border:1px solid #c8cacd;border-radius:5px;"></div>
<span class="t" style="top:386.54px;font-size:10px;font-weight:700;color:#2b2b2b;left:83px;transform:scaleX(0.956);transform-origin:left;">KUNDE</span>
<span class="t" style="top:409.56px;font-size:16px;font-weight:400;color:#474747;right:2053.7px;transform:scaleX(1.068);transform-origin:right;">9104</span>
<div class="a" style="left:81px;top:429px;width:222px;height:1px;background:#dfe1e3;"></div>
<div class="a" style="left:75px;top:446px;width:233px;height:189px;background:#d0d3d6;border:1px solid #c8cacd;border-radius:5px;"></div>
<span class="t" style="top:453.54px;font-size:10px;font-weight:700;color:#2b2b2b;left:83px;transform:scaleX(0.900);transform-origin:left;">LEVERINGSADRESSE</span>
<span class="t" style="top:481.06px;font-size:16px;font-weight:400;color:#474747;left:81.4px;transform:scaleX(0.888);transform-origin:left;">HR. MURERMESTER (kep)</span>
<div class="a" style="left:81px;top:506px;width:222px;height:1px;background:#dfe1e3;"></div>
<span class="t" style="top:521.96px;font-size:16px;font-weight:400;color:#474747;left:81.4px;transform:scaleX(0.873);transform-origin:left;">GERT L. ANDERSEN.</span>
<div class="a" style="left:81px;top:547px;width:222px;height:1px;background:#dfe1e3;"></div>
<span class="t" style="top:562.76px;font-size:16px;font-weight:400;color:#474747;left:81.4px;transform:scaleX(0.954);transform-origin:left;">Bakkegårdsvej 46</span>
<div class="a" style="left:81px;top:588px;width:222px;height:1px;background:#dfe1e3;"></div>
<span class="t" style="top:603.26px;font-size:16px;font-weight:400;color:#474747;left:81.4px;transform:scaleX(0.918);transform-origin:left;">8240  RISSKOV</span>
<div class="a" style="left:81px;top:628px;width:222px;height:1px;background:#dfe1e3;"></div>
<div class="a" style="left:75px;top:647px;width:233px;height:55px;background:#d0d3d6;border:1px solid #c8cacd;border-radius:5px;"></div>
<span class="t" style="top:654.53px;font-size:10px;font-weight:700;color:#000;left:83px;transform:scaleX(0.886);transform-origin:left;">FORSENDELSE</span>
<span class="t" style="top:677.06px;font-size:16px;font-weight:400;color:#474747;left:81.7px;transform:scaleX(0.964);transform-origin:left;">Leveret fra lager</span>
<div class="a" style="left:75px;top:714px;width:233px;height:55px;background:#d0d3d6;border:1px solid #c8cacd;border-radius:5px;"></div>
<span class="t" style="top:721.53px;font-size:10px;font-weight:700;color:#000;left:83px;transform:scaleX(0.912);transform-origin:left;">LEVERINGSSTED</span>
<svg style="left:128.5px;top:735.5px" width="179" height="32" viewBox="0 0 179 32"><path d="M8.5 0 H175 Q179 0 179 4 V26 Q179 32 173 32 H0 Z" fill="#9a9b9b"/></svg>
<span class="t" style="top:744.46px;font-size:16px;font-weight:400;color:#474747;left:93.8px;transform:scaleX(0.959);transform-origin:left;">100</span>
<span class="t" style="top:747.69px;font-size:11px;font-weight:700;color:#222;left:140px;">Afd. Kokholm</span>
<div class="a" style="left:75px;top:781px;width:233px;height:55px;background:#d0d3d6;border:1px solid #c8cacd;border-radius:5px;"></div>
<span class="t" style="top:788.53px;font-size:10px;font-weight:700;color:#000;left:83px;transform:scaleX(0.923);transform-origin:left;">ORDREKODE</span>
<span class="t" style="top:811.56px;font-size:16px;font-weight:400;color:#474747;left:81.2px;">Ordre</span>
<div class="a" style="left:75px;top:848px;width:233px;height:55px;background:#d0d3d6;border:1px solid #c8cacd;border-radius:5px;"></div>
<span class="t" style="top:855.53px;font-size:10px;font-weight:700;color:#000;left:83px;">VALUTA</span>
<span class="t" style="top:878.56px;font-size:16px;font-weight:400;color:#474747;left:81.2px;transform:scaleX(0.881);transform-origin:left;">DKK</span>
<div class="a" style="left:75px;top:915px;width:233px;height:55px;background:#d0d3d6;border:1px solid #c8cacd;border-radius:5px;"></div>
<span class="t" style="top:922.53px;font-size:10px;font-weight:700;color:#000;left:83px;transform:scaleX(1.077);transform-origin:left;">MOMS</span>
<span class="t" style="top:945.56px;font-size:16px;font-weight:400;color:#474747;left:81.2px;transform:scaleX(0.920);transform-origin:left;">Excl.moms</span>
<span class="t" style="top:322.27px;font-size:20px;font-weight:400;color:#1e88f5;left:358px;">Mængder</span>
<span class="t" style="top:322.27px;font-size:20px;font-weight:400;color:#1e88f5;left:610px;transform:scaleX(0.909);transform-origin:left;">Priser</span>
<span class="t" style="top:322.27px;font-size:20px;font-weight:400;color:#1e88f5;left:861.8px;transform:scaleX(0.989);transform-origin:left;">Vareoplysninger</span>
<span class="t" style="top:322.27px;font-size:20px;font-weight:400;color:#1e88f5;left:1114px;transform:scaleX(0.978);transform-origin:left;">Lageroplysninger</span>
<span class="t" style="top:322.27px;font-size:20px;font-weight:400;color:#1e88f5;left:1619.7px;transform:scaleX(0.971);transform-origin:left;">Sammenligningssted</span>
<span class="t" style="top:322.27px;font-size:20px;font-weight:400;color:#1e88f5;left:1872px;transform:scaleX(0.952);transform-origin:left;">EPD miljødata</span>
<div class="a" style="left:357px;top:349px;width:233px;height:55px;background:#fff;border:3px solid #1a8cff;border-radius:8px;"></div>
<span class="t" style="top:356.54px;font-size:10px;font-weight:700;color:#000;left:365px;transform:scaleX(0.964);transform-origin:left;">BEST./LEV. MÆNGDE</span>
<div class="a" style="left:445px;top:375px;width:38px;height:21.5px;background:#cce0f8;"></div>
<span class="t" style="top:379.56px;font-size:16px;font-weight:400;color:#222;right:1866px;transform:scaleX(0.939);transform-origin:right;">0,000</span>
<div class="a" style="left:483px;top:375px;width:2px;height:22px;background:#111;"></div>
<div class="a" style="left:363px;top:397px;width:45px;height:3px;background:#06245a;"></div>
<div class="a" style="left:408px;top:397px;width:83px;height:3px;background:#1a8cff;"></div>
<span class="t" style="top:379.56px;font-size:16px;font-weight:400;color:#474747;left:503.8px;transform:scaleX(0.812);transform-origin:left;">PTR</span>
<div class="a" style="left:503px;top:399px;width:82px;height:1px;background:#e2e2e2;"></div>
<div class="a" style="left:357px;top:416px;width:233px;height:55px;background:#d0d3d6;border:1px solid #c8cacd;border-radius:5px;"></div>
<span class="t" style="top:423.54px;font-size:10px;font-weight:700;color:#000;left:365px;transform:scaleX(0.944);transform-origin:left;">MÆNGDE I LAGERENHED</span>
<span class="t" style="top:446.56px;font-size:16px;font-weight:400;color:#474747;right:1771.5px;transform:scaleX(0.949);transform-origin:right;">0,000</span>
<div class="a" style="left:357px;top:483px;width:233px;height:55px;background:#fff;border:1px solid #cfcfcf;border-radius:5px;"></div>
<span class="t" style="top:490.54px;font-size:10px;font-weight:700;color:#2b2b2b;left:365px;transform:scaleX(0.964);transform-origin:left;">PRISMÆNGDE</span>
<div class="a" style="left:363px;top:505px;width:128px;height:29px;background:#d0d3d6;"></div>
<span class="t" style="top:513.56px;font-size:16px;font-weight:400;color:#474747;right:1865.7px;transform:scaleX(0.949);transform-origin:right;">0,000</span>
<span class="t" style="top:513.56px;font-size:16px;font-weight:400;color:#474747;left:503.8px;transform:scaleX(0.812);transform-origin:left;">PTR</span>
<div class="a" style="left:503px;top:533px;width:82px;height:1px;background:#e2e2e2;"></div>
<div class="a" style="left:357px;top:550px;width:233px;height:55px;background:#fff;border:1px solid #cfcfcf;border-radius:5px;"></div>
<span class="t" style="top:557.53px;font-size:10px;font-weight:700;color:#2b2b2b;left:365px;transform:scaleX(0.933);transform-origin:left;">VÆGT</span>
<span class="t" style="top:557.53px;font-size:10px;font-weight:700;color:#2b2b2b;left:482.3px;">RUMFANG</span>
<span class="t" style="top:580.56px;font-size:16px;font-weight:400;color:#474747;right:1888.5px;transform:scaleX(0.949);transform-origin:right;">0,500</span>
<span class="t" style="top:580.56px;font-size:16px;font-weight:400;color:#474747;right:1771.5px;transform:scaleX(0.949);transform-origin:right;">0,010</span>
<div class="a" style="left:363.4px;top:600px;width:104.20000000000005px;height:1px;background:#e2e2e2;"></div>
<div class="a" style="left:480px;top:600px;width:104.70000000000005px;height:1px;background:#e2e2e2;"></div>
<div class="a" style="left:357px;top:617px;width:233px;height:55px;background:#fff;border:1px solid #cfcfcf;border-radius:5px;"></div>
<span class="t" style="top:624.53px;font-size:10px;font-weight:700;color:#2b2b2b;left:365px;transform:scaleX(0.964);transform-origin:left;">DIMENSION BREDDE</span>
<span class="t" style="top:624.53px;font-size:10px;font-weight:700;color:#2b2b2b;left:482.3px;transform:scaleX(0.922);transform-origin:left;">LÆNGDE</span>
<span class="t" style="top:647.56px;font-size:16px;font-weight:400;color:#474747;right:1888.5px;transform:scaleX(1.011);transform-origin:right;">0</span>
<span class="t" style="top:647.56px;font-size:16px;font-weight:400;color:#474747;right:1771.5px;transform:scaleX(1.011);transform-origin:right;">0</span>
<div class="a" style="left:363.4px;top:667px;width:104.20000000000005px;height:1px;background:#e2e2e2;"></div>
<div class="a" style="left:480px;top:667px;width:104.70000000000005px;height:1px;background:#e2e2e2;"></div>
<div class="a" style="left:357px;top:684px;width:233px;height:55px;background:#d0d3d6;border:1px solid #c8cacd;border-radius:5px;"></div>
<span class="t" style="top:691.53px;font-size:10px;font-weight:700;color:#000;left:365px;transform:scaleX(0.956);transform-origin:left;">MIDLERTIDIG UDSOLGT TIL</span>
<span class="t" style="top:714.56px;font-size:16px;font-weight:400;color:#474747;right:1771.5px;transform:scaleX(1.011);transform-origin:right;">0</span>
<div class="a" style="left:609px;top:349px;width:233px;height:55px;background:#fff;border:1px solid #cfcfcf;border-radius:5px;"></div>
<span class="t" style="top:356.54px;font-size:10px;font-weight:700;color:#2b2b2b;left:617px;">SALGSPRIS</span>
<span class="t" style="top:356.54px;font-size:10px;font-weight:700;color:#2b2b2b;left:695px;transform:scaleX(0.981);transform-origin:left;">RABAT %1</span>
<span class="t" style="top:356.54px;font-size:10px;font-weight:700;color:#2b2b2b;left:773.3px;transform:scaleX(0.981);transform-origin:left;">RABAT %2</span>
<span class="t" style="top:379.56px;font-size:16px;font-weight:400;color:#474747;right:1675.7px;transform:scaleX(0.961);transform-origin:right;">31,95</span>
<span class="t" style="top:379.56px;font-size:16px;font-weight:400;color:#474747;right:1597.5px;transform:scaleX(0.974);transform-origin:right;">11,000</span>
<span class="t" style="top:379.56px;font-size:16px;font-weight:400;color:#474747;right:1519.6px;transform:scaleX(0.961);transform-origin:right;">0,000</span>
<div class="a" style="left:615px;top:399px;width:66px;height:1px;background:#e2e2e2;"></div>
<div class="a" style="left:693px;top:399px;width:66px;height:1px;background:#e2e2e2;"></div>
<div class="a" style="left:771px;top:399px;width:65px;height:1px;background:#e2e2e2;"></div>
<div class="a" style="left:609px;top:416px;width:233px;height:55px;background:#fff;border:1px solid #cfcfcf;border-radius:5px;"></div>
<span class="t" style="top:423.54px;font-size:10px;font-weight:700;color:#2b2b2b;left:617px;transform:scaleX(0.958);transform-origin:left;">KOSTPRIS/DG</span>
<span class="t" style="top:446.56px;font-size:16px;font-weight:400;color:#474747;right:1613.5px;transform:scaleX(0.961);transform-origin:right;">15,30</span>
<span class="t" style="top:446.56px;font-size:16px;font-weight:400;color:#474747;right:1519.6px;transform:scaleX(0.963);transform-origin:right;">46,2</span>
<div class="a" style="left:615px;top:466px;width:128px;height:1px;background:#e2e2e2;"></div>
<div class="a" style="left:755px;top:466px;width:81px;height:1px;background:#e2e2e2;"></div>
<div class="a" style="left:609px;top:483px;width:233px;height:55px;background:#d0d3d6;border:1px solid #c8cacd;border-radius:5px;"></div>
<span class="t" style="top:490.54px;font-size:10px;font-weight:700;color:#2b2b2b;left:617px;transform:scaleX(0.964);transform-origin:left;">KOSTPRIS/DG 2</span>
<span class="t" style="top:513.56px;font-size:16px;font-weight:400;color:#474747;right:1613.5px;transform:scaleX(0.963);transform-origin:right;">2,29</span>
<span class="t" style="top:513.56px;font-size:16px;font-weight:400;color:#474747;right:1519.6px;transform:scaleX(0.963);transform-origin:right;">91,9</span>
<div class="a" style="left:615px;top:533px;width:128px;height:1px;background:#dfe1e3;"></div>
<div class="a" style="left:755px;top:533px;width:81px;height:1px;background:#dfe1e3;"></div>
<div class="a" style="left:609px;top:550px;width:233px;height:55px;background:#d0d3d6;border:1px solid #c8cacd;border-radius:5px;"></div>
<span class="t" style="top:557.53px;font-size:10px;font-weight:700;color:#000;left:617px;transform:scaleX(0.972);transform-origin:left;">RABAT TILSÆTNING</span>
<div class="a" style="left:609px;top:617px;width:233px;height:55px;background:#d0d3d6;border:1px solid #c8cacd;border-radius:5px;"></div>
<span class="t" style="top:624.53px;font-size:10px;font-weight:700;color:#000;left:617px;transform:scaleX(0.940);transform-origin:left;">PRIS PR. KODE</span>
<div class="a" style="left:609px;top:684px;width:233px;height:55px;background:#d0d3d6;border:1px solid #c8cacd;border-radius:5px;"></div>
<span class="t" style="top:691.53px;font-size:10px;font-weight:700;color:#000;left:617px;transform:scaleX(0.927);transform-origin:left;">PRISER</span>
<div class="a" style="left:591px;top:349px;width:30px;height:80px;background:#fff;border:1px solid #555;border-radius:0 8px 8px 8px;"></div>
<div class="a" style="left:591px;top:350px;width:1px;height:55px;background:#fff;"></div>
<svg style="left:596px;top:356px" width="16" height="16" viewBox="0 0 16 16" fill="none" stroke="#111" stroke-width="1.7"><circle cx="6.5" cy="6.5" r="4.8"/><path d="M10 10 L14.5 14.5"/></svg>
<svg style="left:594.5px;top:376px" width="20" height="20" viewBox="0 0 20 20"><rect x="0" y="0" width="20" height="19.5" rx="2" fill="#111"/><path d="M10 0 V20 M0 9.8 H20" stroke="#888" stroke-width="0.8"/><path d="M2.5 5 H7.5 M5 2.5 V7.5 M12.5 5 H17.5 M12.5 12.5 H17.5 M12.5 15 H17.5 M3 11.5 L7 15.5 M7 11.5 L3 15.5" stroke="#fff" stroke-width="0.9"/></svg>
<svg style="left:596px;top:399px" width="17" height="19" viewBox="0 0 17 19"><rect x="0" y="0" width="17" height="16" rx="1" fill="#111"/><path d="M7 16 L8.5 18 L10 16 Z" fill="#111"/><path d="M5.5 4 H14 M5.5 8 H14 M5.5 12 H14" stroke="#fff" stroke-width="1.3"/><circle cx="3" cy="4" r="0.9" fill="#fff"/><circle cx="3" cy="8" r="0.9" fill="#fff"/><circle cx="3" cy="12" r="0.9" fill="#fff"/></svg>
<div class="a" style="left:861px;top:349px;width:233px;height:55px;background:#fff;border:1px solid #cfcfcf;border-radius:5px;"></div>
<span class="t" style="top:356.54px;font-size:10px;font-weight:700;color:#2b2b2b;left:869px;transform:scaleX(0.912);transform-origin:left;">GRUPPE</span>
<span class="t" style="top:356.54px;font-size:10px;font-weight:700;color:#2b2b2b;left:932.5px;transform:scaleX(1.020);transform-origin:left;">VARENUMMER</span>
<span class="t" style="top:356.54px;font-size:10px;font-weight:700;color:#2b2b2b;left:1040.4px;transform:scaleX(0.922);transform-origin:left;">LÆNGDE</span>
<span class="t" style="top:379.56px;font-size:16px;font-weight:400;color:#474747;left:866.7px;transform:scaleX(1.011);transform-origin:left;">4740</span>
<span class="t" style="top:379.56px;font-size:16px;font-weight:400;color:#474747;left:930.3px;">3448834</span>
<div class="a" style="left:867px;top:399px;width:50.700000000000045px;height:1px;background:#e2e2e2;"></div>
<div class="a" style="left:930px;top:399px;width:95.59999999999991px;height:1px;background:#e2e2e2;"></div>
<div class="a" style="left:1038px;top:399px;width:51px;height:1px;background:#e2e2e2;"></div>
<div class="a" style="left:861px;top:416px;width:233px;height:121px;background:#fff;border:1px solid #cfcfcf;border-radius:5px;"></div>
<span class="t" style="top:423.54px;font-size:10px;font-weight:700;color:#2b2b2b;left:869px;transform:scaleX(0.911);transform-origin:left;">VARETEKST</span>
<div class="a" style="left:867px;top:438px;width:222px;height:31.5px;background:#d0d3d6;"></div>
<span class="t" style="top:447.15px;font-size:14px;font-weight:400;color:#474747;left:867.2px;transform:scaleX(0.856);transform-origin:left;">DANA ACRYLFUGEMASSE 557 HVID</span>
<span class="t" style="top:479.26px;font-size:16px;font-weight:400;color:#474747;left:391.6px;width:1200px;text-align:center;transform:scaleX(0.977);transform-origin:center;">300ML</span>
<div class="a" style="left:867px;top:500.5px;width:222px;height:1px;background:#d8d8d8;"></div>
<div class="a" style="left:867px;top:532.5px;width:222px;height:1px;background:#d8d8d8;"></div>
<div class="a" style="left:861px;top:550px;width:233px;height:54px;background:#62d83a;border:1px solid #5cc638;border-radius:5px;"></div>
<span class="t" style="top:557.53px;font-size:10px;font-weight:700;color:#333;left:869px;transform:scaleX(0.950);transform-origin:left;">MILJØMÆRKE</span>
<span class="t" style="top:580.56px;font-size:16px;font-weight:400;color:#505a4a;left:867.5px;transform:scaleX(0.957);transform-origin:left;">Svane mærket</span>
<div class="a" style="left:861px;top:617px;width:233px;height:55px;background:#fff;border:1px solid #cfcfcf;border-radius:5px;"></div>
<span class="t" style="top:624.53px;font-size:10px;font-weight:700;color:#2b2b2b;left:869px;transform:scaleX(0.920);transform-origin:left;">REDIGERINGSKODE</span>
<span class="t" style="top:646.46px;font-size:16px;font-weight:400;color:#474747;left:875px;transform:scaleX(0.901);transform-origin:left;">2 - Netto pris</span>
<svg style="left:1072.5px;top:651px" width="8.5" height="5" viewBox="0 0 8.5 5"><path d="M0 0 H8.5 L4.25 5 Z" fill="#111"/></svg>
<div class="a" style="left:861px;top:684px;width:233px;height:55px;background:#d0d3d6;border:1px solid #c8cacd;border-radius:5px;"></div>
<span class="t" style="top:691.53px;font-size:10px;font-weight:700;color:#000;left:869px;transform:scaleX(0.935);transform-origin:left;">LINJENR</span>
<span class="t" style="top:714.56px;font-size:16px;font-weight:400;color:#474747;right:1268.5px;transform:scaleX(0.786);transform-origin:right;">1</span>
<svg style="left:1102px;top:349px" width="8" height="120" viewBox="0 0 8 120" fill="#7d7d7d"><circle cx="1.4" cy="1.5" r="1.15"/><circle cx="6.4" cy="1.5" r="1.15"/><circle cx="1.4" cy="5.5" r="1.15"/><circle cx="6.4" cy="5.5" r="1.15"/><circle cx="1.4" cy="9.5" r="1.15"/><circle cx="6.4" cy="9.5" r="1.15"/><circle cx="1.4" cy="13.5" r="1.15"/><circle cx="6.4" cy="13.5" r="1.15"/><circle cx="1.4" cy="17.5" r="1.15"/><circle cx="6.4" cy="17.5" r="1.15"/><circle cx="1.4" cy="21.5" r="1.15"/><circle cx="6.4" cy="21.5" r="1.15"/><circle cx="1.4" cy="25.5" r="1.15"/><circle cx="6.4" cy="25.5" r="1.15"/><circle cx="1.4" cy="29.5" r="1.15"/><circle cx="6.4" cy="29.5" r="1.15"/><circle cx="1.4" cy="33.5" r="1.15"/><circle cx="6.4" cy="33.5" r="1.15"/><circle cx="1.4" cy="37.5" r="1.15"/><circle cx="6.4" cy="37.5" r="1.15"/><circle cx="1.4" cy="41.5" r="1.15"/><circle cx="6.4" cy="41.5" r="1.15"/><circle cx="1.4" cy="45.5" r="1.15"/><circle cx="6.4" cy="45.5" r="1.15"/><circle cx="1.4" cy="49.5" r="1.15"/><circle cx="6.4" cy="49.5" r="1.15"/><circle cx="1.4" cy="53.5" r="1.15"/><circle cx="6.4" cy="53.5" r="1.15"/><circle cx="1.4" cy="57.5" r="1.15"/><circle cx="6.4" cy="57.5" r="1.15"/><circle cx="1.4" cy="61.5" r="1.15"/><circle cx="6.4" cy="61.5" r="1.15"/><circle cx="1.4" cy="65.5" r="1.15"/><circle cx="6.4" cy="65.5" r="1.15"/><circle cx="1.4" cy="69.5" r="1.15"/><circle cx="6.4" cy="69.5" r="1.15"/><circle cx="1.4" cy="73.5" r="1.15"/><circle cx="6.4" cy="73.5" r="1.15"/><circle cx="1.4" cy="77.5" r="1.15"/><circle cx="6.4" cy="77.5" r="1.15"/><circle cx="1.4" cy="81.5" r="1.15"/><circle cx="6.4" cy="81.5" r="1.15"/><circle cx="1.4" cy="85.5" r="1.15"/><circle cx="6.4" cy="85.5" r="1.15"/><circle cx="1.4" cy="89.5" r="1.15"/><circle cx="6.4" cy="89.5" r="1.15"/><circle cx="1.4" cy="93.5" r="1.15"/><circle cx="6.4" cy="93.5" r="1.15"/><circle cx="1.4" cy="97.5" r="1.15"/><circle cx="6.4" cy="97.5" r="1.15"/><circle cx="1.4" cy="101.5" r="1.15"/><circle cx="6.4" cy="101.5" r="1.15"/><circle cx="1.4" cy="105.5" r="1.15"/><circle cx="6.4" cy="105.5" r="1.15"/><circle cx="1.4" cy="109.5" r="1.15"/><circle cx="6.4" cy="109.5" r="1.15"/><circle cx="1.4" cy="113.5" r="1.15"/><circle cx="6.4" cy="113.5" r="1.15"/><circle cx="1.4" cy="117.5" r="1.15"/><circle cx="6.4" cy="117.5" r="1.15"/></svg>
<div class="a" style="left:1113px;top:349px;width:233px;height:55px;background:#fff;border:1px solid #cfcfcf;border-radius:5px;"></div>
<span class="t" style="top:356.54px;font-size:10px;font-weight:700;color:#2b2b2b;left:1121px;transform:scaleX(0.884);transform-origin:left;">LAGERSTED</span>
<span class="t" style="top:379.56px;font-size:16px;font-weight:400;color:#474747;right:1015px;">100</span>
<div class="a" style="left:1113px;top:412px;width:233px;height:54px;background:#fff;border:1px solid #cfcfcf;border-radius:5px;"></div>
<span class="t" style="top:419.54px;font-size:10px;font-weight:700;color:#2b2b2b;left:1121px;transform:scaleX(0.934);transform-origin:left;">LEVERINGSMÅDE</span>
<svg style="left:1324px;top:446.5px" width="8.5" height="5" viewBox="0 0 8.5 5"><path d="M0 0 H8.5 L4.25 5 Z" fill="#111"/></svg>
<div class="a" style="left:1113px;top:479px;width:233px;height:55px;background:#d0d3d6;border:1px solid #c8cacd;border-radius:5px;"></div>
<span class="t" style="top:486.54px;font-size:10px;font-weight:700;color:#2b2b2b;left:1121px;transform:scaleX(0.959);transform-origin:left;">BEHOLDNING</span>
<span class="t" style="top:509.56px;font-size:16px;font-weight:400;color:#474747;right:1015px;">299894,000</span>
<div class="a" style="left:1119px;top:529px;width:221px;height:1px;background:#dfe1e3;"></div>
<div class="a" style="left:1113px;top:546px;width:233px;height:55px;background:#d0d3d6;border:1px solid #c8cacd;border-radius:5px;"></div>
<span class="t" style="top:553.53px;font-size:10px;font-weight:700;color:#000;left:1121px;transform:scaleX(0.887);transform-origin:left;">RESERVERET</span>
<span class="t" style="top:576.56px;font-size:16px;font-weight:400;color:#474747;right:1015px;transform:scaleX(0.982);transform-origin:right;">2420,000</span>
<div class="a" style="left:1113px;top:613px;width:233px;height:55px;background:#d0d3d6;border:1px solid #c8cacd;border-radius:5px;"></div>
<span class="t" style="top:620.53px;font-size:10px;font-weight:700;color:#000;left:1121px;transform:scaleX(0.879);transform-origin:left;">BESTILT</span>
<span class="t" style="top:643.56px;font-size:16px;font-weight:400;color:#474747;right:1015px;transform:scaleX(0.982);transform-origin:right;">123882,000</span>
<div class="a" style="left:1113px;top:680px;width:233px;height:55px;background:#d0d3d6;border:1px solid #c8cacd;border-radius:5px;"></div>
<span class="t" style="top:687.53px;font-size:10px;font-weight:700;color:#2b2b2b;left:1121px;transform:scaleX(0.971);transform-origin:left;">LOKATION</span>
<span class="t" style="top:710.56px;font-size:16px;font-weight:400;color:#474747;left:1119px;transform:scaleX(0.933);transform-origin:left;">AP12</span>
<div class="a" style="left:1119px;top:730px;width:221px;height:1px;background:#dfe1e3;"></div>
<div class="a" style="left:1367px;top:349px;width:233px;height:55px;background:#d0d3d6;border:1px solid #c8cacd;border-radius:5px;"></div>
<span class="t" style="top:356.54px;font-size:10px;font-weight:700;color:#000;left:1375px;transform:scaleX(0.949);transform-origin:left;">FJERNLOKATION</span>
<span class="t" style="top:379.56px;font-size:16px;font-weight:400;color:#474747;left:1372.9px;">4444</span>
<div class="a" style="left:1367px;top:416px;width:233px;height:55px;background:#d0d3d6;border:1px solid #c8cacd;border-radius:5px;"></div>
<span class="t" style="top:423.54px;font-size:10px;font-weight:700;color:#000;left:1375px;transform:scaleX(0.937);transform-origin:left;">BEHOLDNING PAKKER</span>
<span class="t" style="top:446.56px;font-size:16px;font-weight:400;color:#474747;right:761.3px;transform:scaleX(0.961);transform-origin:right;">0,000</span>
<div class="a" style="left:1619px;top:349px;width:232px;height:55px;background:#d0d3d6;border:1px solid #c8cacd;border-right:none;border-radius:5px 0 0 5px;"></div>
<span class="t" style="top:356.54px;font-size:10px;font-weight:700;color:#2b2b2b;left:1627px;transform:scaleX(0.979);transform-origin:left;">SAMMENLIGNINGSSTED</span>
<span class="t" style="top:379.56px;font-size:16px;font-weight:400;color:#474747;right:509.29999999999995px;">100</span>
<div class="a" style="left:1625px;top:399px;width:225px;height:1px;background:#dfe1e3;"></div>
<div class="a" style="left:1619px;top:416px;width:232px;height:55px;background:#d0d3d6;border:1px solid #c8cacd;border-right:none;border-radius:5px 0 0 5px;"></div>
<span class="t" style="top:423.54px;font-size:10px;font-weight:700;color:#000;left:1627px;transform:scaleX(0.941);transform-origin:left;">LF</span>
<svg style="left:1687px;top:438px" width="164" height="32" viewBox="0 0 164 32"><path d="M9 0 H164 V32 H0 Z" fill="#9a9b9b"/></svg>
<div class="a" style="left:1626px;top:441px;width:59px;height:26px;background:#a3c5e8;border-radius:13px;"></div>
<div class="a" style="left:1664.5px;top:447px;width:14px;height:14px;border-radius:7px;background:#fff;"></div>
<span class="t" style="top:449.69px;font-size:11px;font-weight:700;color:#222;left:1698px;transform:scaleX(0.898);transform-origin:left;">Ja</span>
<div class="a" style="left:1619px;top:483px;width:232px;height:55px;background:#d0d3d6;border:1px solid #c8cacd;border-right:none;border-radius:5px 0 0 5px;"></div>
<span class="t" style="top:490.54px;font-size:10px;font-weight:700;color:#2b2b2b;left:1627px;transform:scaleX(0.959);transform-origin:left;">BEHOLDNING</span>
<span class="t" style="top:513.56px;font-size:16px;font-weight:400;color:#474747;right:603.7px;">299894,000</span>
<span class="t" style="top:513.56px;font-size:16px;font-weight:400;color:#474747;left:1765.8px;transform:scaleX(0.812);transform-origin:left;">PTR</span>
<div class="a" style="left:1625px;top:533px;width:128px;height:1px;background:#dfe1e3;"></div>
<div class="a" style="left:1765px;top:533px;width:85px;height:1px;background:#dfe1e3;"></div>
<div class="a" style="left:1619px;top:550px;width:232px;height:55px;background:#d0d3d6;border:1px solid #c8cacd;border-right:none;border-radius:5px 0 0 5px;"></div>
<span class="t" style="top:557.53px;font-size:10px;font-weight:700;color:#000;left:1627px;transform:scaleX(0.887);transform-origin:left;">RESERVERET</span>
<span class="t" style="top:580.56px;font-size:16px;font-weight:400;color:#474747;right:509.5999999999999px;transform:scaleX(0.982);transform-origin:right;">2420,000</span>
<div class="a" style="left:1619px;top:617px;width:232px;height:55px;background:#d0d3d6;border:1px solid #c8cacd;border-right:none;border-radius:5px 0 0 5px;"></div>
<span class="t" style="top:624.53px;font-size:10px;font-weight:700;color:#000;left:1627px;transform:scaleX(0.879);transform-origin:left;">BESTILT</span>
<span class="t" style="top:647.56px;font-size:16px;font-weight:400;color:#474747;right:509.5999999999999px;transform:scaleX(0.982);transform-origin:right;">123882,000</span>
<div class="a" style="left:1619px;top:684px;width:232px;height:55px;background:#d0d3d6;border:1px solid #c8cacd;border-right:none;border-radius:5px 0 0 5px;"></div>
<span class="t" style="top:691.53px;font-size:10px;font-weight:700;color:#000;left:1627px;transform:scaleX(0.937);transform-origin:left;">BEHOLDNING PAKKER</span>
<span class="t" style="top:714.56px;font-size:16px;font-weight:400;color:#474747;right:509.5999999999999px;transform:scaleX(0.961);transform-origin:right;">0,000</span>
<div class="a" style="left:1871px;top:349px;width:233px;height:55px;background:#d0d3d6;border:1px solid #c8cacd;border-radius:5px;"></div>
<span class="t" style="top:356.54px;font-size:10px;font-weight:700;color:#000;left:1879px;transform:scaleX(0.958);transform-origin:left;">MODULE A1 KG CO2E/KG</span>
<span class="t" style="top:379.56px;font-size:16px;font-weight:400;color:#474747;right:257px;transform:scaleX(0.990);transform-origin:right;">3,500000000</span>
<div class="a" style="left:1871px;top:416px;width:233px;height:55px;background:#d0d3d6;border:1px solid #c8cacd;border-radius:5px;"></div>
<span class="t" style="top:423.54px;font-size:10px;font-weight:700;color:#000;left:1879px;transform:scaleX(0.958);transform-origin:left;">MODULE A2 KG CO2E/KG</span>
<span class="t" style="top:446.56px;font-size:16px;font-weight:400;color:#474747;right:257px;">-0,660000000</span>
<div class="a" style="left:1871px;top:483px;width:233px;height:55px;background:#d0d3d6;border:1px solid #c8cacd;border-radius:5px;"></div>
<span class="t" style="top:490.54px;font-size:10px;font-weight:700;color:#000;left:1879px;transform:scaleX(0.958);transform-origin:left;">MODULE A3 KG CO2E/KG</span>
<span class="t" style="top:513.56px;font-size:16px;font-weight:400;color:#474747;right:257px;transform:scaleX(0.990);transform-origin:right;">2,130000000</span>
<div class="a" style="left:1871px;top:550px;width:233px;height:55px;background:#d0d3d6;border:1px solid #c8cacd;border-radius:5px;"></div>
<span class="t" style="top:557.53px;font-size:10px;font-weight:700;color:#000;left:1879px;transform:scaleX(0.966);transform-origin:left;">MODULE A1-A3 KG CO2E/KG</span>
<span class="t" style="top:580.56px;font-size:16px;font-weight:400;color:#474747;right:257px;transform:scaleX(0.990);transform-origin:right;">4,970000000</span>
<div class="a" style="left:1871px;top:617px;width:233px;height:55px;background:#d0d3d6;border:1px solid #c8cacd;border-radius:5px;"></div>
<span class="t" style="top:624.53px;font-size:10px;font-weight:700;color:#000;left:1879px;transform:scaleX(0.915);transform-origin:left;">EPD SOURCE</span>
<span class="t" style="top:647.56px;font-size:16px;font-weight:400;color:#474747;left:1877.5px;transform:scaleX(0.819);transform-origin:left;">EPD Source missing (no EPD link)</span>
<div class="a" style="left:1871px;top:684px;width:233px;height:55px;background:#d0d3d6;border:1px solid #c8cacd;border-radius:5px;"></div>
<span class="t" style="top:691.53px;font-size:10px;font-weight:700;color:#000;left:1879px;transform:scaleX(1.011);transform-origin:left;">EPD NUMMER/ID</span>
<span class="t" style="top:714.56px;font-size:16px;font-weight:400;color:#474747;left:1877.5px;transform:scaleX(0.942);transform-origin:left;">EPD-DBC-20220149-IBF1-EN</span>
<div class="a" style="left:1850px;top:298px;width:275px;height:470px;border:4px solid #e31b23;"></div>
<div class="a" style="left:326px;top:815px;width:2023px;height:10px;background:#3a3a3a;"></div>
<div class="a" style="left:372.5px;top:813.5px;width:2px;height:2px;background:#1a7ff0;border-radius:1px;"></div>
<svg style="left:340px;top:815px" width="31" height="8" viewBox="0 0 31 8"><path d="M1 7.5 L7.8 1 L14.5 7.5 Z" fill="#fff"/><path d="M17 1 L30 1 L23.5 7.5 Z" fill="#fff"/></svg>
<span class="t" style="top:838.42px;font-size:12.5px;font-weight:400;color:#2f2f2f;left:359.3px;">Ekspeditionsantal</span>
<span class="t" style="top:838.42px;font-size:12.5px;font-weight:400;color:#2f2f2f;left:474px;transform:scaleX(1.013);transform-origin:left;">Ekspeditionsenhed</span>
<span class="t" style="top:838.42px;font-size:12.5px;font-weight:400;color:#2f2f2f;left:597.2px;transform:scaleX(1.021);transform-origin:left;">Salgspris</span>
<span class="t" style="top:838.42px;font-size:12.5px;font-weight:400;color:#2f2f2f;left:666.2px;transform:scaleX(0.978);transform-origin:left;">Rabat-1</span>
<span class="t" style="top:838.42px;font-size:12.5px;font-weight:400;color:#2f2f2f;left:726px;transform:scaleX(0.989);transform-origin:left;">Rabat-2</span>
<span class="t" style="top:838.42px;font-size:12.5px;font-weight:400;color:#2f2f2f;left:786px;transform:scaleX(1.012);transform-origin:left;">Prisenhed</span>
<span class="t" style="top:838.42px;font-size:12.5px;font-weight:400;color:#2f2f2f;left:859px;transform:scaleX(1.015);transform-origin:left;">Pristilsætningskode</span>
<span class="t" style="top:838.42px;font-size:12.5px;font-weight:400;color:#2f2f2f;left:985.3px;">Fakturanummer</span>
<span class="t" style="top:838.42px;font-size:12.5px;font-weight:400;color:#2f2f2f;left:1089px;">Ordrenummer</span>
<span class="t" style="top:838.42px;font-size:12.5px;font-weight:400;color:#2f2f2f;left:1183.2px;transform:scaleX(0.974);transform-origin:left;">Ordrekode</span>
<span class="t" style="top:838.42px;font-size:12.5px;font-weight:400;color:#2f2f2f;left:1257.2px;transform:scaleX(1.018);transform-origin:left;">Forsendelseskode</span>
<span class="t" style="top:838.42px;font-size:12.5px;font-weight:400;color:#2f2f2f;left:1377.2px;transform:scaleX(1.011);transform-origin:left;">Salgssted</span>
<span class="t" style="top:838.42px;font-size:12.5px;font-weight:400;color:#2f2f2f;left:1449.1px;">Leveringssted</span>
<span class="t" style="top:838.42px;font-size:12.5px;font-weight:400;color:#2f2f2f;left:1543px;">Dato</span>
<span class="t" style="top:838.42px;font-size:12.5px;font-weight:400;color:#2f2f2f;left:1585px;transform:scaleX(1.013);transform-origin:left;">Leveringsadresse 1</span>
<span class="t" style="top:838.42px;font-size:12.5px;font-weight:400;color:#2f2f2f;left:1711px;transform:scaleX(1.013);transform-origin:left;">Leveringsadresse 2</span>
<span class="t" style="top:838.42px;font-size:12.5px;font-weight:400;color:#2f2f2f;left:1837px;transform:scaleX(0.987);transform-origin:left;">Byggeplads</span>
<span class="t" style="top:838.42px;font-size:12.5px;font-weight:400;color:#2f2f2f;left:1918.2px;">Kostpris</span>
<span class="t" style="top:838.42px;font-size:12.5px;font-weight:400;color:#2f2f2f;left:1980px;">Dækningsgrad</span>
<div class="a" style="left:329px;top:855.5px;width:1744px;height:1px;background:#a8a8a8;"></div>
<div class="a" style="left:353px;top:856px;width:1px;height:159px;background:#aaaaaa;"></div>
<span class="t" style="top:884.30px;font-size:13px;font-weight:400;color:#9a9a9a;left:376.3px;transform:scaleX(1.049);transform-origin:left;">Tabellen er tom.</span>
</body></html>
